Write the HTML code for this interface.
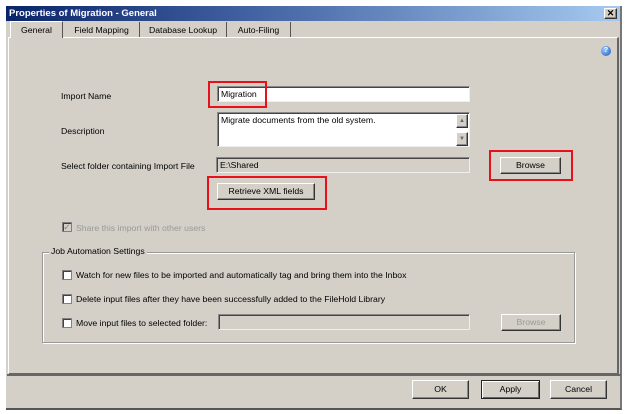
<!DOCTYPE html>
<html><head><style>
*{margin:0;padding:0;box-sizing:border-box}
body{width:628px;height:414px;background:#fff;position:relative;overflow:hidden;font-family:"Liberation Sans",sans-serif;font-size:8.7px;color:#000}
.a{position:absolute}
.win{left:6px;top:6px;width:616px;height:404px;background:#d4d0c8;border-right:2px solid #777;border-bottom:2px solid #555}
.title{left:6px;top:6px;width:614px;height:15px;background:linear-gradient(90deg,#0a246a 0%,#4a6aa8 45%,#a6caf0 100%);color:#fff;font-weight:bold;font-size:9.5px;padding:2px 3px;white-space:nowrap}
.tab{top:22px;height:15px;border-right:1px solid #555;text-align:center;font-size:8.7px;padding-top:3px}
.panel{left:8px;top:37px;width:611px;height:338px;border-top:1px solid #fff;border-left:1px solid #fff;border-right:2px solid #666;border-bottom:2px solid #666}
.in{background:#fff;border:1px solid #888;border-right-color:#eee;border-bottom-color:#eee;box-shadow:inset 1px 1px 0 #444;padding:2px 3px;font-size:8.7px}
.btn{border:1px solid #fff;border-right-color:#333;border-bottom-color:#333;box-shadow:inset -1px -1px 0 #888;text-align:center;font-size:8.7px;background:#d4d0c8}
.red{border:2px solid #e8101a}
.cb{width:10px;height:10px;background:#fff;border:1px solid #808080;box-shadow:inset 1px 1px 0 #404040}
</style></head><body>
<div class="a win"></div>
<div class="a title">Properties of Migration - General</div>
<div class="a btn" style="left:604px;top:8px;width:13px;height:11px;font-size:9px;font-weight:bold;line-height:9px">✕</div>
<div class="a panel"></div>
<div class="a tab" style="left:10px;width:53px;top:21px;height:17px;background:#d4d0c8;border-top:1px solid #fff;border-left:1px solid #fff">General</div>
<div class="a tab" style="left:64px;width:76px">Field Mapping</div>
<div class="a tab" style="left:140px;width:87px">Database Lookup</div>
<div class="a tab" style="left:227px;width:64px">Auto-Filing</div>
<div class="a" style="left:601px;top:46px;width:10px;height:10px;border-radius:50%;background:radial-gradient(circle at 35% 35%,#9cf,#1a4fc0);color:#fff;font-size:7px;font-weight:bold;text-align:center;line-height:10px">?</div>

<div class="a" style="left:61px;top:91px">Import Name</div>
<div class="a" style="left:61px;top:126px">Description</div>
<div class="a" style="left:61px;top:161px">Select folder containing Import File</div>

<div class="a in" style="left:217px;top:86px;width:253px;height:16px">Migration</div>
<div class="a red" style="left:208px;top:81px;width:59px;height:27px"></div>
<div class="a in" style="left:217px;top:112px;width:253px;height:35px;padding-right:16px">Migrate documents from the old system.</div>
<div class="a btn" style="left:456px;top:114px;width:12px;height:14px;font-size:6px;color:#666;line-height:12px">▲</div>
<div class="a btn" style="left:456px;top:132px;width:12px;height:14px;font-size:6px;color:#666;line-height:12px">▼</div>
<div class="a in" style="left:216px;top:157px;width:254px;height:16px;background:#d4d0c8">E:\Shared</div>
<div class="a btn" style="left:500px;top:157px;width:61px;height:17px;line-height:15px">Browse</div>
<div class="a red" style="left:489px;top:150px;width:84px;height:31px"></div>
<div class="a btn" style="left:217px;top:183px;width:98px;height:17px;line-height:15px">Retrieve XML fields</div>
<div class="a red" style="left:207px;top:176px;width:120px;height:34px"></div>

<div class="a cb" style="left:62px;top:222px;background:#d4d0c8;color:#888;font-size:9px;line-height:8px;text-align:center">✓</div>
<div class="a" style="left:76px;top:223px;color:#999">Share this import with other users</div>

<div class="a" style="left:42px;top:252px;width:533px;height:91px;border:1px solid #999;box-shadow:1px 1px 0 #fff,inset 1px 1px 0 #fff"></div>
<div class="a" style="left:49px;top:246px;background:#d4d0c8;padding:0 2px">Job Automation Settings</div>
<div class="a cb" style="left:62px;top:270px"></div>
<div class="a" style="left:76px;top:270px">Watch for new files to be imported and automatically tag and bring them into the Inbox</div>
<div class="a cb" style="left:62px;top:294px"></div>
<div class="a" style="left:76px;top:294px">Delete input files after they have been successfully added to the FileHold Library</div>
<div class="a cb" style="left:62px;top:318px"></div>
<div class="a" style="left:76px;top:318px">Move input files to selected folder:</div>
<div class="a in" style="left:218px;top:314px;width:252px;height:16px;background:#d4d0c8"></div>
<div class="a btn" style="left:501px;top:314px;width:60px;height:17px;line-height:15px;color:#999">Browse</div>

<div class="a" style="left:7px;top:374px;width:614px;height:2px;background:#666"></div>
<div class="a btn" style="left:412px;top:380px;width:57px;height:19px;line-height:17px">OK</div>
<div class="a btn" style="left:481px;top:380px;width:59px;height:19px;line-height:17px;border-color:#222;box-shadow:inset 1px 1px 0 #fff,inset -1px -1px 0 #666">Apply</div>
<div class="a btn" style="left:550px;top:380px;width:57px;height:19px;line-height:17px">Cancel</div>
</body></html>
